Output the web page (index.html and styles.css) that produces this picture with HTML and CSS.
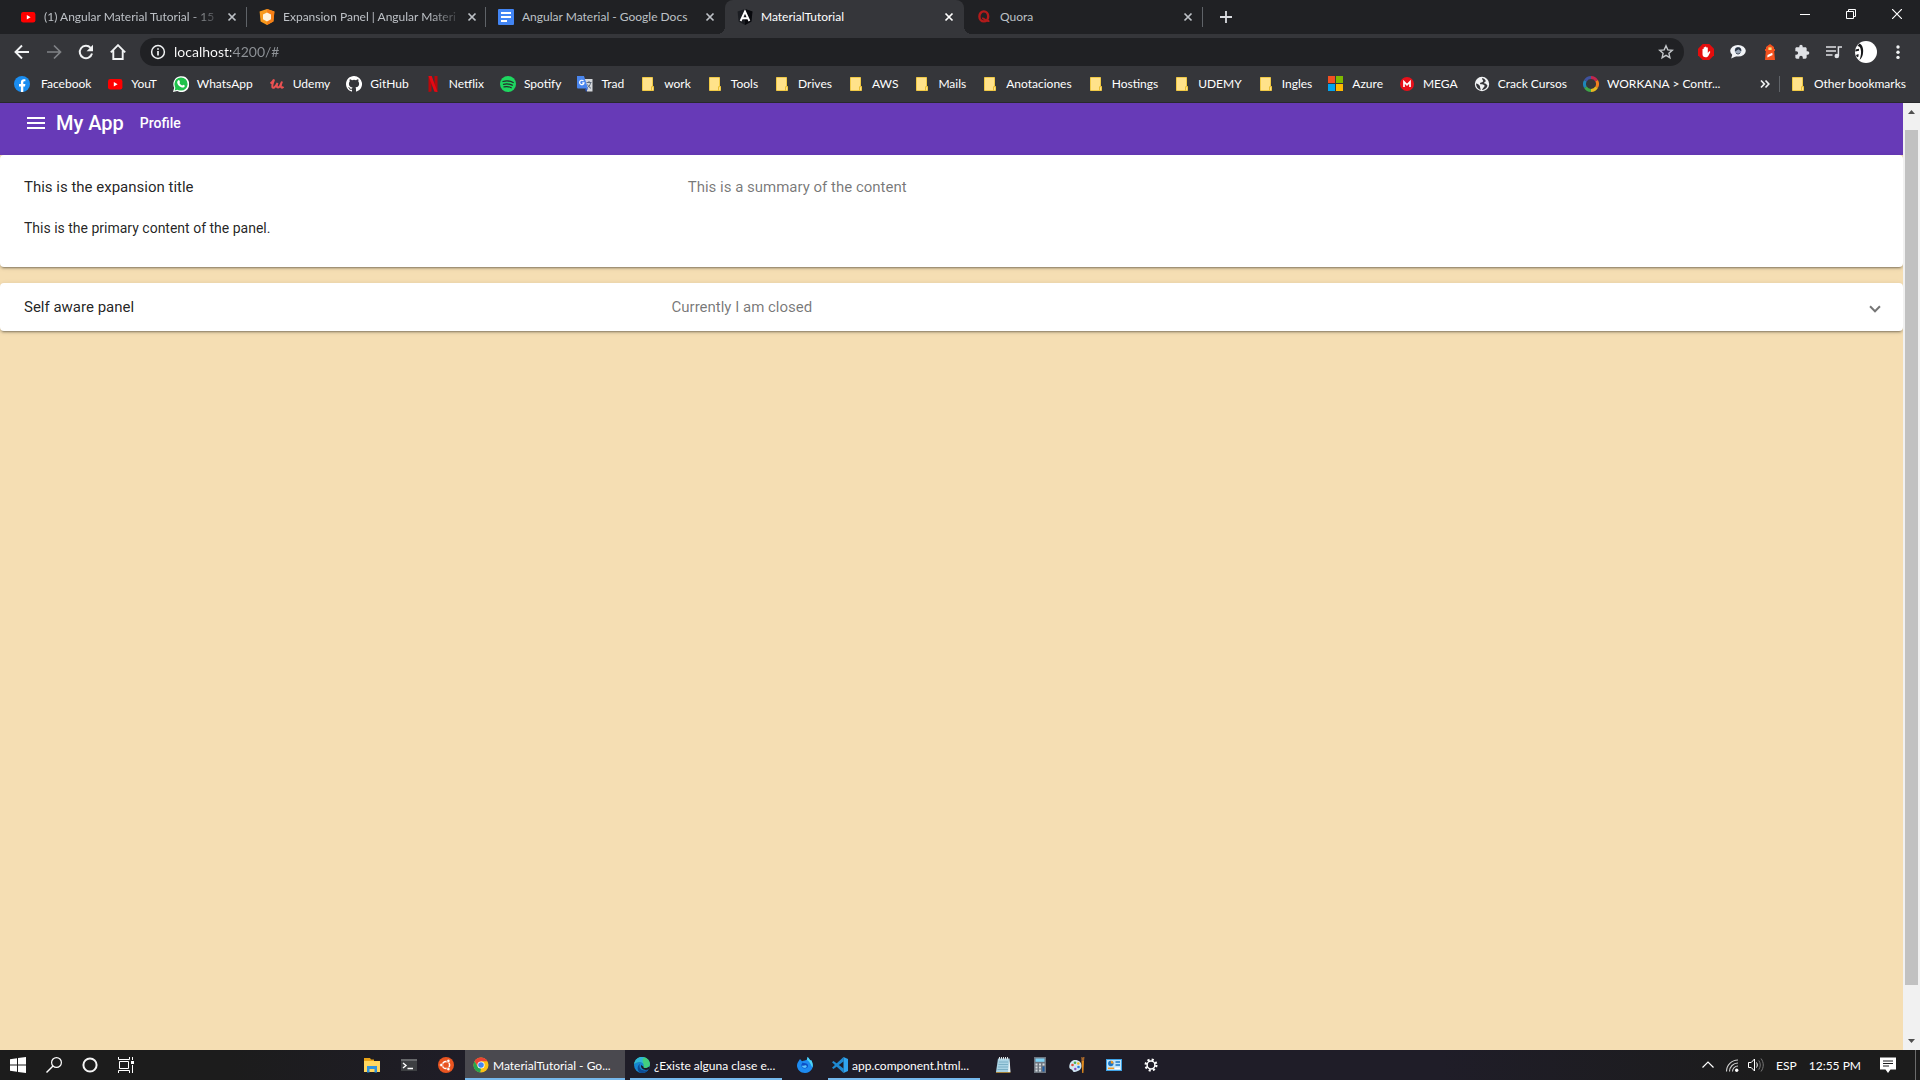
FILE: index.html
```html
<!DOCTYPE html>
<html lang="en">
<head>
  <meta charset="UTF-8">
  <meta name="viewport" content="width=device-width, initial-scale=1.0">
  <title>MaterialTutorial</title>
  <link rel="stylesheet" href="styles.css">
</head>
<body>
  <!-- shared shapes -->
  <svg class="defs" width="0" height="0" aria-hidden="true">
    <symbol id="close" viewBox="0 0 16 16">
      <path d="M4.5 4.5l7 7M11.5 4.5l-7 7" stroke="currentColor" stroke-width="1.7"/>
    </symbol>
    <symbol id="youtube" viewBox="0 0 16 16">
      <rect x="1" y="3" width="14.4" height="10.6" rx="2.4" fill="#f00"/>
      <path d="M6.8 6v4.6l3.8-2.3z" fill="#fff"/>
    </symbol>
    <symbol id="folder" viewBox="0 0 16 16">
      <path d="M2.5 1.5h10v9h1v4h-11z" fill="#ffe28a" stroke="#f0c945"/>
      <path d="M11.5 14.5v-3.8h2" fill="none" stroke="#e8bd32"/>
    </symbol>
  </svg>

  <div class="tab-strip">
    <div class="tab">
      <svg class="icon"><use href="#youtube"/></svg>
      <span class="tab-title fade">(1) Angular Material Tutorial - 15</span>
      <button class="tab-close" aria-label="Close tab"><svg class="icon"><use href="#close"/></svg></button>
    </div>
    <div class="tab">
      <svg class="icon" viewBox="0 0 16 16">
        <path d="M8 0l7.4 2.4-1 10L8 16l-6.4-3.6-1-10z" fill="#f89a1c"/>
        <path d="M8 0l7.4 2.4-1 10L8 16z" fill="#f57f17"/>
        <path d="M8 3.6l4 2v4.6l-4 2.4-4-2.4V5.6z" fill="#fff3dc"/>
      </svg>
      <span class="tab-title fade">Expansion Panel | Angular Materi</span>
      <button class="tab-close" aria-label="Close tab"><svg class="icon"><use href="#close"/></svg></button>
    </div>
    <div class="tab before-active">
      <svg class="icon" viewBox="0 0 16 16">
        <rect width="16" height="16" rx="1" fill="#4285f4"/>
        <path d="M3 4h10M3 8h10M3 12h6" stroke="#fff" stroke-width="2"/>
      </svg>
      <span class="tab-title">Angular Material - Google Docs</span>
      <button class="tab-close" aria-label="Close tab"><svg class="icon"><use href="#close"/></svg></button>
    </div>
    <div class="tab active">
      <svg class="icon" viewBox="0 0 16 16">
        <path d="M8 0l7.4 2.4-1 10L8 16l-6.4-3.6-1-10z" fill="#1b1d22"/>
        <path d="M8 0l7.4 2.4-1 10L8 16z" fill="#08090d"/>
        <path d="M3.6 12L8 2.600 12.4 12M5.4 9.2h5.2" fill="none" stroke="#fff" stroke-width="1.9"/>
      </svg>
      <span class="tab-title">MaterialTutorial</span>
      <button class="tab-close" aria-label="Close tab"><svg class="icon"><use href="#close"/></svg></button>
    </div>
    <div class="tab">
      <svg class="icon" viewBox="0 0 16 16">
        <ellipse cx="7.800" cy="7.400" rx="4.400" ry="5" fill="none" stroke="#b31b1b" stroke-width="2.400"/>
        <path d="M6 9.400c2.500-.5 3.500 3.600 7.400 2.400" fill="none" stroke="#b31b1b" stroke-width="1.800"/>
      </svg>
      <span class="tab-title">Quora</span>
      <button class="tab-close" aria-label="Close tab"><svg class="icon"><use href="#close"/></svg></button>
    </div>
    <button class="new-tab" aria-label="New tab">
      <svg class="icon" viewBox="0 0 16 16"><path d="M8 2v12M2 8h12" stroke="currentColor" stroke-width="1.800"/></svg>
    </button>
    <div class="window-controls">
      <button aria-label="Minimize"><svg viewBox="0 0 10 10" width="10" height="10"><path d="M0 5.500h10" stroke="#fff"/></svg></button>
      <button aria-label="Restore"><svg viewBox="0 0 10 10" width="10" height="10"><path d="M.5 2.500h7v7h-7zM2.500 2.500v-2h7v7h-2" fill="none" stroke="#fff"/></svg></button>
      <button aria-label="Close"><svg viewBox="0 0 10 10" width="10" height="10"><path d="M0 0l10 10M10 0L0 10" stroke="#fff" stroke-width="1.200"/></svg></button>
    </div>
  </div>

  <div class="toolbar">
    <button class="tool" aria-label="Back"><svg class="icon" viewBox="0 0 16 16"><path d="M15 8H2M8 1.500L1.500 8 8 14.500" fill="none" stroke="#f1f3f4" stroke-width="1.900"/></svg></button>
    <button class="tool" aria-label="Forward"><svg class="icon" viewBox="0 0 16 16"><path d="M1 8h13M8 1.500L14.500 8 8 14.500" fill="none" stroke="#808386" stroke-width="1.700"/></svg></button>
    <button class="tool" aria-label="Reload"><svg class="icon" viewBox="0 0 16 16"><path d="M14 9.500A6.200 6.200 0 1 1 12.600 3.800" fill="none" stroke="#f1f3f4" stroke-width="2"/><path d="M15 .8v6.400H8.600z" fill="#f1f3f4"/></svg></button>
    <button class="tool" aria-label="Home"><svg class="icon" viewBox="0 0 16 16"><path d="M.8 8.400L8 1.200l7.200 7.200M3.300 6.500V15h9.400V6.500" fill="none" stroke="#f1f3f4" stroke-width="1.900"/></svg></button>
    <div class="omnibox">
      <svg class="icon" viewBox="0 0 16 16"><circle cx="8" cy="8" r="6.400" fill="none" stroke="#f1f3f4" stroke-width="1.500"/><path d="M8 7v4.500M8 4.200v1.600" stroke="#f1f3f4" stroke-width="1.700"/></svg>
      <input class="address" type="text" value="localhost:4200/#" aria-label="Address">
      <button class="star" aria-label="Bookmark this page"><svg class="icon" viewBox="0 0 16 16"><path d="M8 1.800l1.800 4.100 4.500.4-3.400 3 1 4.400L8 11.400l-3.900 2.300 1-4.400-3.400-3 4.500-.4z" fill="none" stroke="#c4c7ca" stroke-width="1.400"/></svg></button>
    </div>
    <div class="extensions">
      <button class="tool" aria-label="AdBlock"><svg class="icon" viewBox="0 0 16 16"><path d="M4.700 0h6.600L16 4.700v6.600L11.300 16H4.700L0 11.300V4.700z" fill="#e40d0d"/><path d="M4.500 9V5.300c0-.9 1.200-.9 1.200 0V3.800c0-1 1.300-1 1.300 0V3.200c0-1 1.400-1 1.400 0v.7c0-1 1.400-1 1.400 0V9l1.200-1.400c.7-.7 1.500 0 1.100.8L10.300 12c-.6 1-1.300 1.300-2.600 1.300-2 0-3.200-1-3.200-3z" fill="#fff"/></svg></button>
      <button class="tool" aria-label="Speech"><svg class="icon" viewBox="0 0 16 16"><ellipse cx="8" cy="6.800" rx="7.800" ry="5.800" fill="#f1f3f6"/><path d="M2.500 10l-1.300 4.500 5.500-2.500z" fill="#f1f3f6"/><circle cx="8" cy="6.500" r="3.300" fill="#9aa7b8"/><path d="M5.200 7.500C4.500 3.500 7 3 8.500 3.200c2 .2 3 1.500 2.800 4L10 6.500 8.500 5.300z" fill="#2a3442"/><path d="M6.200 9.300c1.500 1 3 .8 4-.5" fill="none" stroke="#2a3442"/></svg></button>
      <button class="tool" aria-label="Lighthouse"><svg class="icon" viewBox="0 0 16 16"><path d="M8 0l4 3v2h1v2h-.8L13 16H3l.8-9H3V5h1V3z" fill="#f4511e"/><path d="M6.400 3.400h3.200V6H6.400z" fill="#ffe27a"/><path d="M5.500 11l4.800-2.300.3 2.300-5.300 2.500z" fill="#fff"/></svg></button>
      <button class="tool" aria-label="Extensions"><svg class="icon" viewBox="0 0 24 24"><path d="M20.500 11H19V7c0-1.100-.9-2-2-2h-4V3.500a2.500 2.500 0 0 0-5 0V5H4c-1.100 0-2 .9-2 2v3.800h1.500a2.700 2.700 0 0 1 0 5.400H2V20c0 1.100.9 2 2 2h3.800v-1.500a2.700 2.700 0 0 1 5.400 0V22H17c1.100 0 2-.9 2-2v-4h1.500a2.500 2.500 0 0 0 0-5z" fill="#dfe1e5"/></svg></button>
      <button class="tool" aria-label="Media"><svg class="icon" viewBox="0 0 16 16"><path d="M0 3h10M0 7h10M0 11h6.500" stroke="#dfe1e5" stroke-width="1.500"/><circle cx="10.800" cy="12" r="2.300" fill="#dfe1e5"/><path d="M12.400 12V3H16" fill="none" stroke="#dfe1e5" stroke-width="1.500"/></svg></button>
      <button class="tool" aria-label="Account"><svg viewBox="0 0 22 22" width="22" height="22"><circle cx="11" cy="11" r="11" fill="#fff"/><path d="M4.500 2.500C8 4 8.800 9 7.800 13.500 7.300 16 6 18 4.500 19 6 15 6.700 11 5.500 7.500 5 6 4 5 2.500 5z" fill="#17181a"/><path d="M.5 8.500L4 7.800v2L.3 10.500zM1 14l2.500-1v2.500l-1.500.7z" fill="#17181a"/></svg></button>
      <button class="tool" aria-label="Menu"><svg class="icon" viewBox="0 0 16 16"><g fill="#f1f3f4"><circle cx="8" cy="3" r="1.700"/><circle cx="8" cy="8.200" r="1.700"/><circle cx="8" cy="13.400" r="1.700"/></g></svg></button>
    </div>
  </div>

  <nav class="bookmarks">
    <a href="#"><svg class="icon" viewBox="0 0 16 16"><circle cx="8" cy="8" r="8" fill="#1a8df0"/><path d="M6.900 16v-5.500H5V8.100h1.900V6.300c0-2 1.200-3.100 3-3.100.8 0 1.500.1 1.500.1v2h-.9c-1 0-1.200.6-1.200 1.200v1.600h2.100l-.4 2.400H9.300V16z" fill="#fff"/></svg>&nbsp;Facebook</a>
    <a href="#"><svg class="icon"><use href="#youtube"/></svg>YouT</a>
    <a href="#"><svg class="icon" viewBox="0 0 16 16"><path d="M0 16l1.200-4.200A8 8 0 1 1 4.200 15z" fill="#fff"/><circle cx="8" cy="8" r="6.600" fill="#1fc24b"/><path d="M1.700 14.400l.9-3.400 2.500 2.500z" fill="#1fc24b"/><path d="M5.500 4.200c.5-.2.800 0 1 .5l.5 1.200c.1.400-.7 1-.6 1.200.6 1.200 1.500 2 2.700 2.500.3 0 .8-1 1.100-.9l1.500.8c.4.300-.1 1.900-1.500 2.100-2.800.2-6.200-3.200-6-5.400.1-1 .7-1.700 1.300-2z" fill="#fff"/></svg>WhatsApp</a>
    <a href="#"><svg class="icon" viewBox="0 0 16 16"><path d="M1.500 7.500C3 6.500 4.300 4.800 5 3.500 4.500 6 2.800 9 3.300 11c.6 2 3.200.5 5.200-4-1 2.500-1 4.500.5 4.500 2 0 3-3.500 4-6-1 2.500-1.500 4.500-1 5.500.4 1 1.500.8 2.500-.2" fill="none" stroke="#ea5252" stroke-width="2"/></svg>Udemy</a>
    <a href="#"><svg class="icon" viewBox="0 0 16 16"><path d="M8 0C3.580 0 0 3.580 0 8c0 3.540 2.290 6.530 5.470 7.590.4.070.55-.17.550-.38v-1.490c-2.230.49-2.700-.94-2.700-.94-.36-.92-.89-1.170-.89-1.170-.73-.5.060-.49.060-.49.800.06 1.230.83 1.230.83.720 1.210 1.870.86 2.330.66.070-.52.280-.87.500-1.070-1.780-.2-3.640-.89-3.640-3.950 0-.87.310-1.590.82-2.150-.08-.2-.36-1.020.08-2.120 0 0 .67-.21 2.200.82a7.600 7.600 0 0 1 4 0c1.530-1.040 2.200-.82 2.200-.82.440 1.100.16 1.920.08 2.120.51.560.82 1.270.82 2.150 0 3.070-1.870 3.750-3.650 3.950.290.25.54.73.54 1.480v2.200c0 .21.150.46.550.38A8 8 0 0 0 8 0z" fill="#fff"/></svg>GitHub</a>
    <a href="#"><svg class="icon" viewBox="0 0 16 16"><path d="M3.500 0h3v15.500l-3 .5zM9.500 0h3v16l-3-.5z" fill="#b9090b"/><path d="M3.500 0h3.200l5.800 16-3.200-.4z" fill="#e50914"/></svg>Netflix</a>
    <a href="#"><svg class="icon" viewBox="0 0 16 16"><circle cx="8" cy="8" r="8" fill="#1ed760"/><path d="M3 5.500c3.500-1 7-.7 10.200 1M3.500 8.300c3-.8 6-.5 8.700.9M4 10.900c2.600-.6 5-.4 7.200.8" fill="none" stroke="#262d2a" stroke-width="1.300" stroke-linecap="round"/></svg>Spotify</a>
    <a href="#"><svg class="icon" viewBox="0 0 16 16"><path d="M7 3h8.500v12.500H10z" fill="#d5d8dc"/><path d="M9.500 6.500h5M12 5v1.500M13.500 7c-.5 2.500-2 4-3.500 5M10.500 8.500c1 2 2 3 3.500 3.800" fill="none" stroke="#5f6b7c"/><path d="M0 0h7l4 12.500H1a1 1 0 0 1-1-1z" fill="#4a86ee"/><path d="M8 12.500h3L9 16z" fill="#2a56c6"/><path d="M6.500 5a2.200 2.200 0 1 0 .5 1.800H5.300" fill="none" stroke="#fff" stroke-width="1.200"/></svg>Trad</a>
    <a href="#"><svg class="icon"><use href="#folder"/></svg>work</a>
    <a href="#"><svg class="icon"><use href="#folder"/></svg>Tools</a>
    <a href="#"><svg class="icon"><use href="#folder"/></svg>Drives</a>
    <a href="#"><svg class="icon"><use href="#folder"/></svg>AWS</a>
    <a href="#"><svg class="icon"><use href="#folder"/></svg>Mails</a>
    <a href="#"><svg class="icon"><use href="#folder"/></svg>Anotaciones</a>
    <a href="#"><svg class="icon"><use href="#folder"/></svg>Hostings</a>
    <a href="#"><svg class="icon"><use href="#folder"/></svg>UDEMY</a>
    <a href="#"><svg class="icon"><use href="#folder"/></svg>Ingles</a>
    <a href="#"><svg class="icon" viewBox="0 0 16 16"><path d="M0 0h7v7H0z" fill="#f25022"/><path d="M8 0h7v7H8z" fill="#7fba00"/><path d="M0 8h7v7H0z" fill="#00a4ef"/><path d="M8 8h7v7H8z" fill="#ffb900"/></svg>Azure</a>
    <a href="#"><svg class="icon" viewBox="0 0 16 16"><circle cx="8" cy="8" r="7" fill="#e8101a"/><path d="M5 11V5.800l3 3 3-3V11" fill="none" stroke="#fff" stroke-width="1.700"/></svg>MEGA</a>
    <a href="#"><svg class="icon" viewBox="0 0 16 16"><circle cx="8" cy="8" r="7.200" fill="#f1f3f4"/><path d="M8.500 2C7 3.500 10 4 9 5.500S6 6 6 7.500s4 .5 4.500 2-2 2.500-2.500 4.500c3-.5 5-2 5.500-4.500-1-.5-1-2-2.500-2s-.5-2 1-2.300C11 3.500 10 2.300 8.500 2zM2 7.500c1.500 0 4 1.500 4 3S7 13 6.500 14C4 13 2 11 2 7.500z" fill="#35363a"/></svg>Crack Cursos</a>
    <a href="#"><svg class="icon" viewBox="0 0 16 16"><g fill="none" stroke-width="3"><path d="M8 1.500A6.500 6.500 0 0 1 13.600 4.700" stroke="#c2264e"/><path d="M13.600 4.700A6.500 6.500 0 0 1 13.600 11.300" stroke="#f0801f"/><path d="M13.600 11.300A6.500 6.500 0 0 1 8 14.500" stroke="#e6b821"/><path d="M8 14.500A6.500 6.500 0 0 1 2.400 11.300" stroke="#3fa648"/><path d="M2.400 11.300A6.500 6.500 0 0 1 2.400 4.700" stroke="#1f86b8"/><path d="M2.400 4.700A6.500 6.500 0 0 1 8 1.500" stroke="#3f529e"/></g></svg>WORKANA &gt; Contr...</a>
    <div class="bookmarks-end">
      <button class="overflow" aria-label="More bookmarks"><svg class="icon" viewBox="0 0 16 16"><path d="M4 4.500L7.300 8 4 11.500M8.500 4.500L11.800 8l-3.300 3.500" fill="none" stroke="#f1f3f4" stroke-width="1.700"/></svg></button>
      <a class="other" href="#"><svg class="icon"><use href="#folder"/></svg>Other bookmarks</a>
    </div>
  </nav>

  <div class="viewport">
    <main class="page">
      <header class="app-bar">
        <button class="menu" aria-label="Open menu"><svg viewBox="0 0 24 24" width="24" height="24"><path d="M3 18h18v-2H3v2zm0-5h18v-2H3v2zm0-7v2h18V6H3z" fill="#fff"/></svg></button>
        <h1>My App</h1>
        <a href="#">Profile</a>
      </header>
      <section class="panel expanded">
        <div class="panel-header">
          <span class="panel-title">This is the expansion title</span>
          <span class="panel-description">This is a summary of the content</span>
        </div>
        <p>This is the primary content of the panel.</p>
      </section>
      <section class="panel">
        <button class="panel-header">
          <span class="panel-title">Self aware panel</span>
          <span class="panel-description">Currently I am closed</span>
          <span class="indicator"></span>
        </button>
      </section>
    </main>
    <div class="scrollbar">
      <svg viewBox="0 0 17 17" width="17" height="17"><path d="M5 11h7L8.500 7z" fill="#505050"/></svg>
      <div class="track"><div class="thumb"></div></div>
      <svg viewBox="0 0 17 17" width="17" height="17"><path d="M5 6h7l-3.500 4z" fill="#505050"/></svg>
    </div>
  </div>

  <footer class="taskbar">
    <div class="start-group">
      <button aria-label="Start"><svg class="icon" viewBox="0 0 16 16"><path d="M0 2.300l7-1v6.200H0zM8 1.100L16 0v7.500H8zM0 8.500h7v6.200l-7-1zM8 8.500h8V16l-8-1.100z" fill="#fff"/></svg></button>
      <button aria-label="Search"><svg class="icon" viewBox="0 0 16 16"><circle cx="10.500" cy="5.500" r="4.900" fill="none" stroke="#fff" stroke-width="1.200"/><path d="M7 9L.5 15.500" stroke="#fff" stroke-width="1.400"/></svg></button>
      <button aria-label="Cortana"><svg class="icon" viewBox="0 0 16 16"><circle cx="8" cy="8" r="6.600" fill="none" stroke="#f4f4f4" stroke-width="2"/></svg></button>
      <button aria-label="Task view"><svg class="icon" viewBox="0 0 16 16"><path d="M.5 0v2.500h11V0M.5 16v-2.500h11V16M1.500 4.500h9v7h-9zM14.500 0v3M14.500 8v8" fill="none" stroke="#fff"/><path d="M13 4h3v3h-3z" fill="#fff"/></svg></button>
    </div>
    <div class="task-group">
      <button aria-label="File Explorer"><svg class="icon" viewBox="0 0 16 16"><path d="M0 1h6l1 1.500h3V5H0z" fill="#e8a317"/><path d="M0 4h16v11H0z" fill="#ffd75e"/><path d="M3 9h10v6.500h-2.500V12h-5v3.500H3z" fill="#2e93dc"/></svg></button>
      <button aria-label="Terminal"><svg class="icon" viewBox="0 0 16 16"><path d="M0 2h16v12H0z" fill="#3d3f42"/><path d="M0 2h16v2H0z" fill="#66686b"/><path d="M2 6l3 2.500L2 11M6.500 11.500H12" fill="none" stroke="#fff" stroke-width="1.400"/></svg></button>
      <button aria-label="Ubuntu"><svg class="icon" viewBox="0 0 16 16"><circle cx="8" cy="8" r="8" fill="#e95420"/><circle cx="8" cy="8" r="3.600" fill="none" stroke="#fff" stroke-width="1.500"/><g fill="#fff" stroke="#e95420" stroke-width=".7"><circle cx="3.300" cy="8" r="1.700"/><circle cx="10.400" cy="3.900" r="1.700"/><circle cx="10.400" cy="12.100" r="1.700"/></g></svg></button>
    </div>
    <button class="task current"><svg class="icon" viewBox="0 0 16 16"><circle cx="8" cy="8" r="7.500" fill="#fbc116"/><path d="M1.500 4.300A7.500 7.500 0 0 1 14.500 4.300H8L5 9.800z" fill="#ea4335"/><path d="M1.500 4.300L4.800 9.800 8 11.500l-.8 4A7.500 7.500 0 0 1 1.500 4.300z" fill="#25a650"/><circle cx="8" cy="8" r="3.600" fill="#fff"/><circle cx="8" cy="8" r="2.800" fill="#4285f4"/></svg>MaterialTutorial - Go...</button>
    <button class="task"><svg class="icon" viewBox="0 0 16 16"><circle cx="8" cy="8" r="8" fill="#1685cf"/><path d="M.3 7C1 2.500 4.500 0 8 0c5 0 8 3.500 8 7 0 2.500-2 4-4.500 4-1.500 0-2.500-.5-2-1.300C10 8 9.500 5.500 6.500 5 3.500 4.600 1.500 5.500.3 7z" fill="#42cf7e"/><path d="M.3 7C1 2.500 4.500 0 8 0c.8 0 2 .2 3 .6C7 1.500 9 4 9.500 7 8 4.300 3.500 4 .3 7z" fill="#2fb5d8"/><path d="M6 7c-1.500 3 .5 6.500 4.500 6.500 1.500 0 3-.4 4.200-1.200A8 8 0 0 1 7 16C3 15 2.500 9 6 7z" fill="#0d4b94"/><path d="M9.500 9.700c-.5.800.5 1.300 2 1.300 1.500 0 3-.6 3.800-1.500l.5.500-1.100 2.300C11 14 6.500 12 7 8z" fill="#1c1c22"/></svg>¿Existe alguna clase e...</button>
    <button class="solo" aria-label="Firefox"><svg class="icon" viewBox="0 0 16 16"><path d="M3 2l2 2.200C7 3.500 9 3.500 10 2.500L10.500 0c2 1.500 2 2.800 2.800 3.500L14 3c2 3 2.500 6.500.8 9.300A8 8 0 0 1 8 16C3.500 16 0 12.500 0 8.500 0 6 1.500 4.500 3 2z" fill="#1d8bf0"/><path d="M10.500 0c2 1.500 2 2.800 2.800 3.500L14 3c1.700 2.600 2.200 5 1.400 7.500C14 8 12.500 4 10 3z" fill="#4fd7f5"/><path d="M5.500 5.500c1 1.200 3.500 0 5 1.800 1.200 1.600.4 4.200-2.500 4.200S4.200 9.500 4.500 7.500z" fill="#0b4fc5"/><path d="M5 8.500c2 .7 3.500-1 4.500.3s-1 2.500-2.500 2-2-1-2-2.300z" fill="#5dc7ff"/></svg></button>
    <button class="task"><svg class="icon" viewBox="0 0 16 16"><path d="M11.500 0v4.500L1.500 12 0 10.800z" fill="#1f8ad2"/><path d="M1.500 4L0 5.200 11.500 16v-4.500z" fill="#1f8ad2"/><path d="M11.500 0L16 2v12l-4.500 2z" fill="#2fa4ee"/></svg>app.component.html...</button>
    <div class="task-group">
      <button aria-label="Notepad"><svg class="icon" viewBox="0 0 16 16"><path d="M3 1.500h11.500V15H1z" fill="#a9d3e4"/><path d="M14.500 1.500L15.500 15H13z" fill="#e8f2f5"/><path d="M4 5h9M3.500 7.500H13M3 10h10M2.500 12.500H13" stroke="#6fa7be" stroke-width=".8"/><path d="M4.500 0v2.500M6.500 0v2.500M8.500 0v2.500M10.500 0v2.500M12.500 0v2.500" stroke="#dfe5e8"/><path d="M1 15h14.500v.8H1z" fill="#c99a3c"/></svg></button>
      <button aria-label="Calculator"><svg class="icon" viewBox="0 0 16 16"><path d="M2 0h12v16H2z" fill="#6e7680"/><path d="M3.500 1.500h9v3.300h-9z" fill="#7fd3f7"/><path d="M3.500 6.500h2v2h-2zM7 6.500h2v2H7zM10.500 6.500h2v2h-2zM3.500 9.500h2v2h-2zM7 9.500h2v2H7zM3.500 12.500h2v2h-2zM7 12.500h2v2H7z" fill="#d4d9de"/><path d="M10.500 9.500h2v5h-2z" fill="#1f5fa8"/></svg></button>
      <button aria-label="Paint"><svg class="icon" viewBox="0 0 16 16"><path d="M6 3c4 0 7 2.500 6.500 6.500-.3 3-3 5-7 5.500-2 .2-1.500-2-3-2.500C.8 12 0 11 .3 9 .8 5.500 3 3 6 3z" fill="#cfe6f2"/><circle cx="3.500" cy="8" r="1.300" fill="#e14b3b"/><circle cx="6" cy="5.700" r="1.300" fill="#4caf50"/><circle cx="9.300" cy="6.500" r="1.300" fill="#f5b822"/><circle cx="9.500" cy="10" r="1.300" fill="#2b7de0"/><circle cx="6.300" cy="12" r="1.200" fill="#8c4bc0"/><path d="M12.500 4h2.500l-.6 12h-1.200z" fill="#e08a1e"/><path d="M12.300 0h1l.5 1 .5-1h1.200L15 4h-2.500z" fill="#a8682a"/></svg></button>
      <button aria-label="Control Panel"><svg class="icon" viewBox="0 0 16 16"><path d="M0 2h16v12H0z" fill="#3ea2e5"/><path d="M1 3h14v10H1z" fill="#bfe5fb"/><circle cx="4.800" cy="6.500" r="2.700" fill="#1b75c4"/><path d="M4.800 6.500V3.800a2.700 2.700 0 0 1 2.700 2.700z" fill="#f59a23"/><path d="M9.500 5H14M9.500 8H14" stroke="#1b75c4" stroke-width="1.500"/><path d="M2 11.300h6" stroke="#f59a23" stroke-width="1.500"/><path d="M9 11.300h5" stroke="#fff" stroke-width="1.500"/></svg></button>
      <button aria-label="Settings"><svg class="icon" viewBox="0 0 16 16"><circle cx="8" cy="8" r="5.400" fill="none" stroke="#fff" stroke-width="2.200" stroke-dasharray="2.120 2.120"/><circle cx="8" cy="8" r="3.900" fill="none" stroke="#fff" stroke-width="1.500"/></svg></button>
    </div>
    <div class="tray">
      <button aria-label="Show hidden icons"><svg class="icon" viewBox="0 0 16 16"><path d="M2.500 10.500L8 5l5.500 5.500" fill="none" stroke="#fff" stroke-width="1.200"/></svg></button>
      <button aria-label="Network"><svg class="icon" viewBox="0 0 16 16"><path d="M2.500 14.500A11.500 11.500 0 0 1 14 3M5.500 14.500A8.500 8.500 0 0 1 14 6M8.500 14.500A5.500 5.500 0 0 1 14 9" fill="none" stroke="#d0d0d0" stroke-width="1.100"/><circle cx="12.700" cy="13.300" r="1.700" fill="#fff"/></svg></button>
      <button aria-label="Volume"><svg class="icon" viewBox="0 0 16 16"><path d="M.5 5.500h2.700L6.500 2v12l-3.300-3.500H.5z" fill="none" stroke="#fff"/><path d="M8.500 5.500c1 1.500 1 3.500 0 5" fill="none" stroke="#fff"/><path d="M10.800 3.500c2 2.700 2 6.300 0 9M13 1.500c3 4 3 9 0 13" fill="none" stroke="#777"/></svg></button>
      <span class="lang">ESP</span>
      <time>12:55 PM</time>
      <button class="notifications" aria-label="Notifications"><svg class="icon" viewBox="0 0 16 16"><path d="M0 .5h16v12h-5.500L8 16l-2.500-3.500H0z" fill="#fff"/><path d="M3 4h10M3 6.500h10M3 9h6" stroke="#1c1c1e"/></svg></button>
    </div>
  </footer>
</body>
</html>
```
FILE: styles.css
```css
* {
  box-sizing: border-box;
}

body {
  margin: 0;
  height: 100vh;
  display: flex;
  flex-direction: column;
  overflow: hidden;
  font-family: Lato, sans-serif;
  font-size: 12px;
  background-color: #202124;
  color: #fff;
}

button {
  display: flex;
  align-items: center;
  justify-content: center;
  padding: 0;
  border: none;
  background: none;
  color: inherit;
  font: inherit;
}

a {
  color: inherit;
  text-decoration: none;
}

svg {
  display: block;
  flex-shrink: 0;
}

.defs {
  position: absolute;
}

.icon {
  width: 16px;
  height: 16px;
}

/* tabs */
.tab-strip {
  display: flex;
  height: 34px;
  padding-left: 8px;
  background-color: #202124;
}

.tab {
  position: relative;
  display: flex;
  align-items: center;
  gap: 8px;
  width: 239px;
  padding: 0 7px 0 12px;
  color: #bdc1c6;
}

.tab::after {
  content: "";
  position: absolute;
  right: 0;
  top: 7px;
  width: 1px;
  height: 20px;
  background-color: #5f6368;
}

.tab.before-active::after {
  display: none;
}

.tab-title {
  flex: 1;
  white-space: nowrap;
  line-height: 20px;
}

.fade {
  mask-image: linear-gradient(to right, #000 85%, rgba(0, 0, 0, 0.2));
}

.tab-close {
  width: 16px;
}

.tab.active {
  background-color: #35363a;
  border-radius: 8px 8px 0 0;
  color: #fff;
}

.tab.active::before,
.tab.active::after {
  content: "";
  position: absolute;
  top: auto;
  bottom: 0;
  width: 8px;
  height: 8px;
  background: radial-gradient(circle at 0 0, transparent 8px, #35363a 8px);
}

.tab.active::before {
  left: -8px;
}

.tab.active::after {
  right: -8px;
  background: radial-gradient(circle at 100% 0, transparent 8px, #35363a 8px);
}

.new-tab {
  width: 46px;
  color: #dadce0;
}

.window-controls {
  display: flex;
  height: 28px;
  margin-left: auto;
}

.window-controls button {
  width: 46px;
}

/* address bar */
.toolbar {
  display: flex;
  align-items: center;
  height: 34px;
  padding: 2px 6px 0;
  background-color: #35363a;
}

.tool {
  width: 32px;
  height: 28px;
}

.omnibox {
  flex: 1;
  display: flex;
  align-items: center;
  gap: 8px;
  height: 28px;
  margin: 0 6px;
  padding: 0 10px;
  border-radius: 14px;
  background-color: #202124;
}

.address {
  flex: 1;
  padding: 0 0 2px;
  border: none;
  outline: none;
  font: 14px Lato, sans-serif;
  color: transparent;
  /* host in white, the rest greyed out */
  background: linear-gradient(to right, #fff 57px, #8f9398 57px);
  background-clip: text;
}

.extensions {
  display: flex;
}

/* bookmarks */
.bookmarks {
  display: flex;
  align-items: center;
  gap: 16px;
  height: 35px;
  padding: 0 14px 3px;
  border-bottom: 1px solid #28292c;
  background-color: #35363a;
  white-space: nowrap;
}

.bookmarks a {
  display: flex;
  align-items: center;
  gap: 8px;
}

.bookmarks-end {
  display: flex;
  align-items: center;
  margin-left: auto;
}

.overflow {
  padding-right: 6px;
}

.bookmarks .other {
  padding-left: 10px;
  border-left: 1px solid #5f6368;
}

/* web page */
.viewport {
  flex: 1;
  display: flex;
  min-height: 0;
  overflow: hidden;
}

.page {
  flex: 1;
  background-color: #f5deb3;
  color: rgba(0, 0, 0, 0.87);
  font-family: Roboto, sans-serif;
}

.app-bar {
  display: flex;
  align-items: center;
  height: 52px;
  padding: 0 24px 12px;
  background-color: #673ab7;
  color: #fff;
}

.app-bar h1 {
  margin: 0 16px 0 8px;
  font-size: 20px;
  font-weight: 500;
}

.app-bar a {
  font-size: 14px;
  font-weight: 500;
}

.panel {
  border-radius: 4px;
  background-color: #fff;
  box-shadow: 0 3px 1px -2px rgba(0, 0, 0, 0.2), 0 2px 2px 0 rgba(0, 0, 0, 0.14), 0 1px 5px 0 rgba(0, 0, 0, 0.12);
}

.expanded {
  margin-bottom: 16px;
}

.panel-header {
  display: flex;
  align-items: center;
  justify-content: flex-start;
  width: 100%;
  height: 48px;
  padding: 0 24px;
  font-size: 15px;
  text-align: left;
}

.expanded .panel-header {
  height: 64px;
}

.panel-title {
  flex-grow: 1;
  margin-right: 16px;
}

.panel-description {
  flex-grow: 2;
  margin-right: 16px;
  color: rgba(0, 0, 0, 0.54);
}

.indicator {
  width: 8px;
  height: 8px;
  border: solid rgba(0, 0, 0, 0.54);
  border-width: 0 2px 2px 0;
  transform: rotate(45deg);
}

.panel p {
  margin: 0;
  padding: 0 24px 30px;
  font-size: 14px;
  line-height: 18px;
}

.scrollbar {
  display: flex;
  flex-direction: column;
  width: 17px;
  background-color: #f1f1f1;
}

.track {
  flex: 1;
  padding: 10px 2px 48px;
}

.thumb {
  height: 100%;
  background-color: #c1c1c1;
}

/* taskbar */
.taskbar {
  display: flex;
  height: 30px;
  background: linear-gradient(to right, #1c1c1c 12%, #1f1d28 25%, #1f1d28 75%, #1c1c1c 92%);
}

.start-group,
.task-group {
  display: flex;
}

.start-group {
  margin-right: 209px;
}

.start-group button {
  width: 36px;
}

.task-group button,
.solo {
  width: 37px;
}

.task {
  justify-content: flex-start;
  gap: 4px;
  width: 152px;
  margin: 0 4px 0 5px;
  padding: 2px 4px 0;
  border-bottom: 2px solid #76b9ed;
  white-space: nowrap;
}

.current {
  width: 160px;
  margin: 0 0 0 1px;
  padding-left: 8px;
  background-color: #4a494f;
}

.tray {
  display: flex;
  align-items: center;
  margin-left: auto;
  margin-right: 4px;
  border-right: 1px solid #6b6b6b;
}

.tray button {
  width: 24px;
}

.lang {
  margin: 0 12px 0 8px;
}

.tray .notifications {
  width: 54px;
}
```
